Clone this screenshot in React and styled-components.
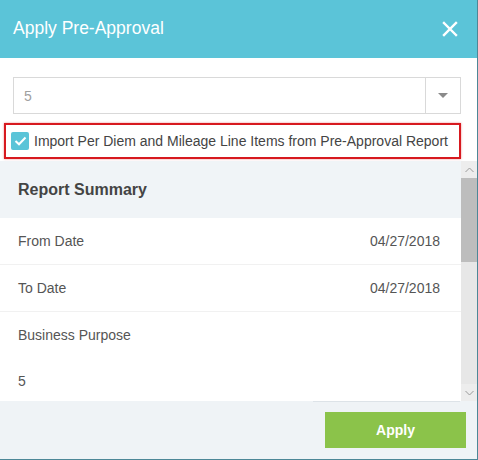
import React, { useState } from 'react';
import styled, { createGlobalStyle } from 'styled-components';

const GlobalStyle = createGlobalStyle`
  html, body {
    margin: 0;
    padding: 0;
    background: #ffffff;
    font-family: "Liberation Sans", Arial, sans-serif;
  }
`;

const Modal = styled.div`
  width: 477px;
  height: 459px;
  border-right: 1px solid #4d8797;
  border-bottom: 1px solid #4d8797;
  background: #ffffff;
  display: flex;
  flex-direction: column;
  overflow: hidden;
`;

const Header = styled.header`
  height: 58px;
  flex-shrink: 0;
  background: #5bc4d8;
  display: flex;
  align-items: center;
  justify-content: space-between;
  padding: 0 19px 0 13px;
`;

const Title = styled.h2`
  margin: 0;
  font-size: 17.5px;
  font-weight: normal;
  color: #ffffff;
  padding-bottom: 2px;
`;

const CloseButton = styled.button`
  border: 0;
  background: none;
  padding: 0;
  width: 16px;
  height: 16px;
  display: flex;
  cursor: pointer;
`;

const Body = styled.div`
  padding: 19px 16px 0 4px;
`;

const Select = styled.div`
  margin-left: 9px;
  height: 35px;
  border: 1px solid #d9d9d9;
  display: flex;
  align-items: stretch;
`;

const SelectValue = styled.div`
  flex: 1;
  display: flex;
  align-items: center;
  padding-left: 10px;
  font-size: 14px;
  color: #a0a0a0;
`;

const SelectArrow = styled.div`
  width: 34px;
  border-left: 1px solid #d9d9d9;
  display: flex;
  align-items: center;
  justify-content: center;
  &::after {
    content: '';
    border-left: 5px solid transparent;
    border-right: 5px solid transparent;
    border-top: 5px solid #8a8a8a;
  }
`;

const CheckRow = styled.label`
  margin-top: 9px;
  height: 32px;
  border: 2px solid #d7191f;
  box-shadow: 0 0 2px rgba(215, 25, 31, 0.5);
  display: flex;
  align-items: center;
  gap: 5px;
  padding-left: 5px;
  font-size: 14px;
  color: #444444;
  cursor: pointer;
`;

const Box = styled.span`
  width: 18px;
  height: 18px;
  border-radius: 2px;
  background: ${p => (p.checked ? '#5bc4d8' : '#ffffff')};
  border: ${p => (p.checked ? 'none' : '1px solid #ccc')};
  display: flex;
  align-items: center;
  justify-content: center;
  flex-shrink: 0;
`;

const ScrollArea = styled.div`
  margin-top: 2px;
  height: 240px;
  flex-shrink: 0;
  display: flex;
`;

const Content = styled.div`
  flex: 1;
  overflow: hidden;
`;

const SummaryHead = styled.div`
  height: 57px;
  background: #f0f4f7;
  display: flex;
  align-items: center;
  padding-left: 18px;
  font-size: 16px;
  font-weight: bold;
  color: #444444;
`;

const Row = styled.div`
  height: 46px;
  border-bottom: 1px solid #f1f1f1;
  display: flex;
  align-items: center;
  justify-content: space-between;
  padding: 0 21px 0 18px;
  font-size: 14px;
  color: #555555;
`;

const Stacked = styled.div`
  display: flex;
  flex-direction: column;
  padding: 0 21px 0 18px;
  font-size: 14px;
  color: #555555;
`;

const Line = styled.div`
  height: 46px;
  display: flex;
  align-items: center;
`;

const Scrollbar = styled.div`
  width: 16px;
  background: #e7e7e7;
  display: flex;
  flex-direction: column;
`;

const ScrollBtn = styled.div`
  height: 17px;
  display: flex;
  align-items: center;
  justify-content: center;
  background: #ededed;
`;

const Thumb = styled.div`
  height: 84px;
  background: #bdbdbd;
`;

const Track = styled.div`
  flex: 1;
`;

const Footer = styled.footer`
  flex: 1;
  background:
    linear-gradient(to right, transparent 313px, #dde3e8 313px, #dde3e8 460px, transparent 460px) top / 100% 1px no-repeat,
    #eff3f6;
  display: flex;
  justify-content: flex-end;
  align-items: flex-start;
  padding: 11px 11px 0 0;
`;

const ApplyButton = styled.button`
  width: 141px;
  height: 36px;
  border: 0;
  background: #8bc34a;
  color: #ffffff;
  font-family: inherit;
  font-size: 14px;
  font-weight: bold;
  cursor: pointer;
`;

const Chevron = ({ up }) => (
  <svg width="9" height="6" viewBox="0 0 9 6">
    <path
      d={up ? 'M0.5 5 L4.5 1 L8.5 5' : 'M0.5 1 L4.5 5 L8.5 1'}
      fill="none"
      stroke="#9a9a9a"
      strokeWidth="1"
    />
  </svg>
);

const summary = [
  { label: 'From Date', value: '04/27/2018' },
  { label: 'To Date', value: '04/27/2018' },
];

export default function App() {
  const [checked, setChecked] = useState(true);

  return (
    <>
      <GlobalStyle />
      <Modal>
        <Header>
          <Title>Apply Pre-Approval</Title>
          <CloseButton aria-label="Close">
            <svg width="16" height="16" viewBox="0 0 16 16">
              <path d="M2 2 L14 14 M14 2 L2 14" stroke="#fff" strokeWidth="2.4" strokeLinecap="square" />
            </svg>
          </CloseButton>
        </Header>
        <Body>
          <Select>
            <SelectValue>5</SelectValue>
            <SelectArrow />
          </Select>
          <CheckRow onClick={() => setChecked(!checked)}>
            <Box checked={checked}>
              {checked && (
                <svg width="13" height="10" viewBox="0 0 13 10">
                  <path d="M1.5 5 L5 8.3 L11.5 1.5" fill="none" stroke="#fff" strokeWidth="2" />
                </svg>
              )}
            </Box>
            Import Per Diem and Mileage Line Items from Pre-Approval Report
          </CheckRow>
        </Body>
        <ScrollArea>
          <Content>
            <SummaryHead>Report Summary</SummaryHead>
            {summary.map(item => (
              <Row key={item.label}>
                <span>{item.label}</span>
                <span>{item.value}</span>
              </Row>
            ))}
            <Stacked>
              <Line>Business Purpose</Line>
              <Line>5</Line>
            </Stacked>
          </Content>
          <Scrollbar>
            <ScrollBtn>
              <Chevron up />
            </ScrollBtn>
            <Thumb />
            <Track />
            <ScrollBtn>
              <Chevron />
            </ScrollBtn>
          </Scrollbar>
        </ScrollArea>
        <Footer>
          <ApplyButton>Apply</ApplyButton>
        </Footer>
      </Modal>
    </>
  );
}
